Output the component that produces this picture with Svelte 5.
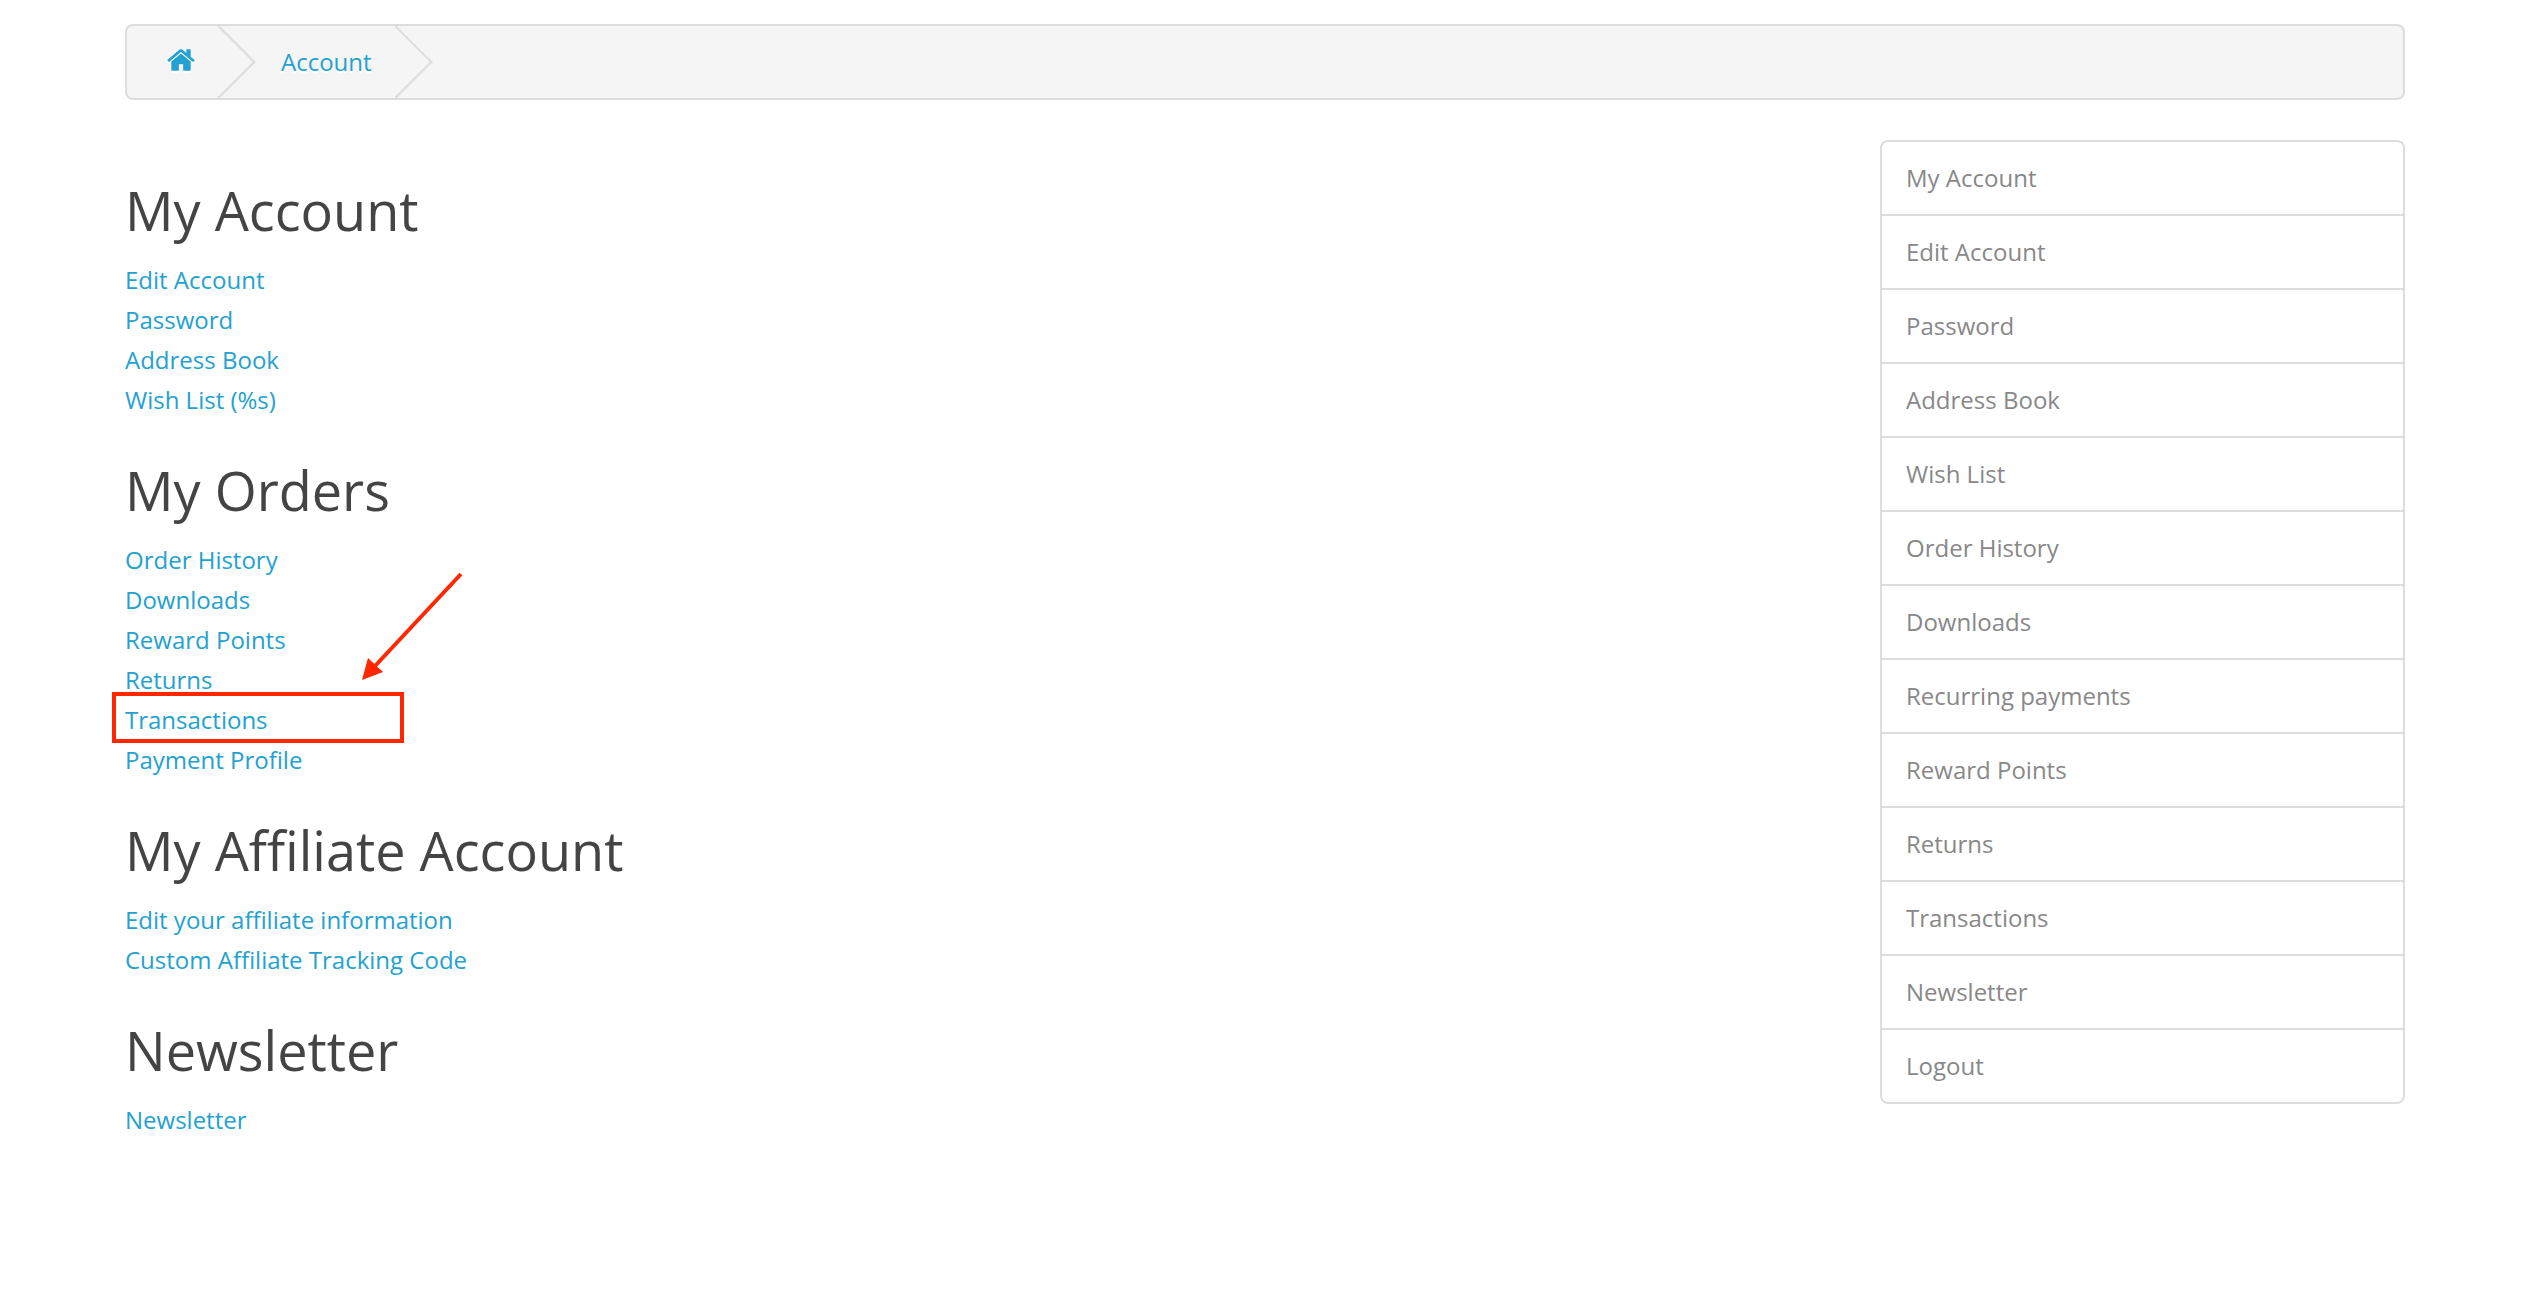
<script lang="ts">
  const sections = [
    {
      title: "My Account",
      links: ["Edit Account", "Password", "Address Book", "Wish List (%s)"],
    },
    {
      title: "My Orders",
      links: [
        "Order History",
        "Downloads",
        "Reward Points",
        "Returns",
        "Transactions",
        "Payment Profile",
      ],
      marked: "Transactions",
    },
    {
      title: "My Affiliate Account",
      links: ["Edit your affiliate information", "Custom Affiliate Tracking Code"],
    },
    { title: "Newsletter", links: ["Newsletter"] },
  ]

  const menu = [
    "My Account",
    "Edit Account",
    "Password",
    "Address Book",
    "Wish List",
    "Order History",
    "Downloads",
    "Recurring payments",
    "Reward Points",
    "Returns",
    "Transactions",
    "Newsletter",
    "Logout",
  ]
</script>

<div class="container">
  <nav aria-label="Breadcrumb">
    <ul class="breadcrumb">
      <li>
        <a href="#home" aria-label="Home">
          <svg class="home" viewBox="64 256 1664 1280" aria-hidden="true">
            <path
              d="M1472 992v480q0 26-19 45t-45 19h-384v-384h-256v384h-384q-26 0-45-19t-19-45v-480q0-1 .5-3t.5-3l575-474 575 474q1 2 1 6zm223-69l-62 74q-8 9-21 11h-3q-13 0-21-7l-692-577-692 577q-12 8-24 7-13-2-21-11l-62-74q-8-10-7-23.5t11-21.5l719-599q32-26 76-26t76 26l244 204v-195q0-14 9-23t23-9h192q14 0 23 9t9 23v408l219 182q10 8 11 21.5t-7 23.5z"
            />
          </svg>
        </a>
      </li>
      <li><a href="#account">Account</a></li>
    </ul>
  </nav>

  <div class="row">
    <main class="content">
      {#each sections as section}
        <h2>{section.title}</h2>
        <ul class="links">
          {#each section.links as link}
            <li class:marked={link === section.marked}>
              <a href="#account">{link}</a>
              {#if link === section.marked}
                <span class="box"></span>
                <svg class="arrow" viewBox="0 0 104 112" aria-hidden="true">
                  <path class="shaft" d="M101 4L15 96" />
                  <path class="head" d="M2 110L8 88L23 102Z" />
                </svg>
              {/if}
            </li>
          {/each}
        </ul>
      {/each}
    </main>

    <aside class="column-right">
      <div class="list-group">
        {#each menu as item}
          <a class="list-group-item" href="#account">{item}</a>
        {/each}
      </div>
    </aside>
  </div>
</div>

<style>
  :global(body) {
    margin: 0;
    background: #fff;
    color: #666;
    font-family: "Open Sans", sans-serif;
    font-size: 24px;
    line-height: 40px;
  }
  .container {
    box-sizing: border-box;
    max-width: 2340px;
    margin: 0 auto;
    padding: 24px 30px;
  }
  a {
    color: #23a1d1;
    text-decoration: none;
  }
  ul {
    list-style: none;
    margin: 0;
    padding: 0;
  }
  .breadcrumb {
    display: flex;
    gap: 6px;
    margin-bottom: 40px;
    padding: 16px 0;
    background: #f5f5f5;
    border: 2px solid #ddd;
    border-radius: 8px;
  }
  .breadcrumb li {
    position: relative;
    padding: 0 40px;
    text-shadow: 0 2px 0 #fff;
  }
  /* chevron after every crumb */
  .breadcrumb li::after {
    content: "";
    box-sizing: border-box;
    position: absolute;
    top: -6px;
    right: -10px;
    width: 52px;
    height: 52px;
    border-top: 2px solid #ddd;
    border-right: 2px solid #ddd;
    transform: rotate(45deg);
    pointer-events: none;
  }
  .breadcrumb a {
    display: flex;
    align-items: center;
    height: 40px;
  }
  .home {
    width: 28px;
    height: 22px;
    margin-bottom: 4px;
    fill: #23a1d1;
    overflow: visible;
    filter: drop-shadow(0 2px 0 #fff);
  }
  .row {
    display: flex;
    margin: 0 -30px;
  }
  .content,
  .column-right {
    box-sizing: border-box;
    padding: 0 30px;
  }
  .content {
    width: 75%;
    padding-top: 40px;
  }
  .column-right {
    width: 25%;
  }
  h2 {
    margin: 0 0 20px;
    color: #444;
    font-size: 54px;
    font-weight: 400;
    line-height: 60px;
  }
  .links {
    margin-bottom: 40px;
  }
  .marked {
    position: relative;
  }
  .box {
    box-sizing: border-box;
    position: absolute;
    top: -8px;
    left: -13px;
    width: 292px;
    height: 51px;
    border: 4px solid #ff2600;
    pointer-events: none;
  }
  .arrow {
    position: absolute;
    top: -130px;
    left: 235px;
    width: 104px;
    height: 112px;
    pointer-events: none;
  }
  .shaft {
    stroke: #ff2600;
    stroke-width: 4;
  }
  .head {
    fill: #ff2600;
  }
  .list-group-item {
    display: block;
    padding: 16px 24px;
    color: #888;
    border: 2px solid #ddd;
    border-bottom-width: 0;
  }
  .list-group-item:first-child {
    border-radius: 8px 8px 0 0;
  }
  .list-group-item:last-child {
    border-bottom-width: 2px;
    border-radius: 0 0 8px 8px;
  }
</style>
